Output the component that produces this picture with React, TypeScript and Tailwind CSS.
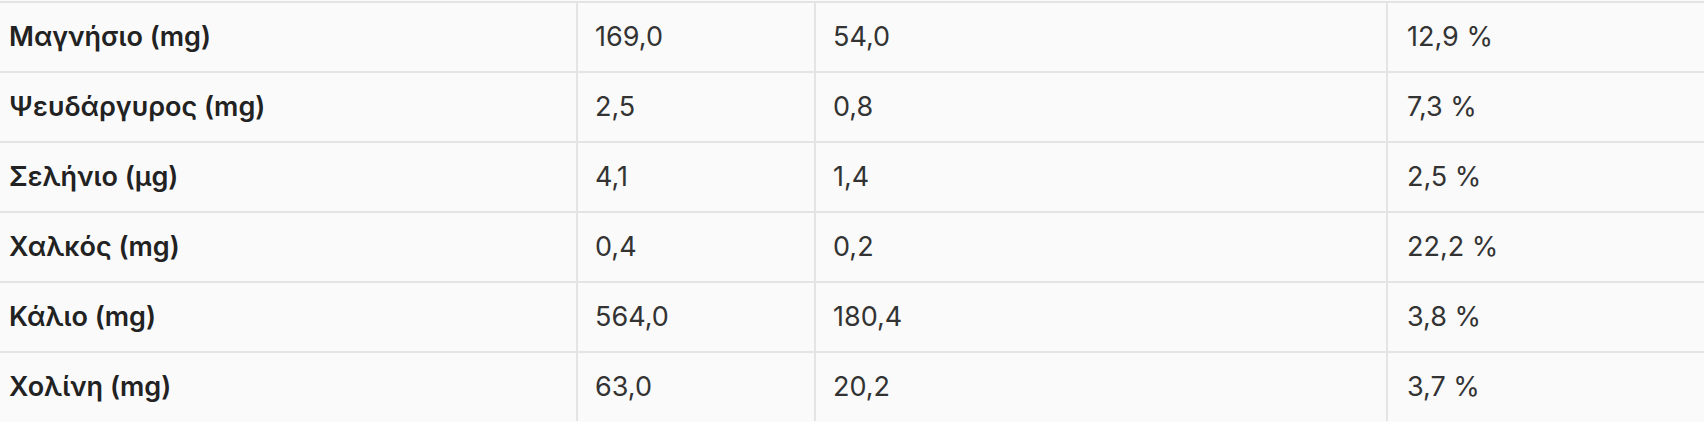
import React from 'react';

const rows = [
  { name: 'Μαγνήσιο (mg)', a: '169,0', b: '54,0', c: '12,9 %' },
  { name: 'Ψευδάργυρος (mg)', a: '2,5', b: '0,8', c: '7,3 %' },
  { name: 'Σελήνιο (μg)', a: '4,1', b: '1,4', c: '2,5 %' },
  { name: 'Χαλκός (mg)', a: '0,4', b: '0,2', c: '22,2 %' },
  { name: 'Κάλιο (mg)', a: '564,0', b: '180,4', c: '3,8 %' },
  { name: 'Χολίνη (mg)', a: '63,0', b: '20,2', c: '3,7 %' },
];

const App = () => {
  return (
    <div className="w-[1704px] h-[422px] overflow-hidden bg-[#fafafa] pt-px font-['Inter',sans-serif] text-[27px]">
      {rows.map((r) => (
        <div
          key={r.name}
          className="grid grid-cols-[576px_238px_572px_1fr] h-[70px] border-t-2 border-[#e4e4e4]"
        >
          <div className="flex items-center pl-[9px] font-semibold text-[#222]">{r.name}</div>
          <div className="flex items-center pl-[17px] border-l-2 border-[#e4e4e4] text-[#333]">{r.a}</div>
          <div className="flex items-center pl-[17px] border-l-2 border-[#e4e4e4] text-[#333]">{r.b}</div>
          <div className="flex items-center pl-[19px] border-l-2 border-[#e4e4e4] text-[#333]">{r.c}</div>
        </div>
      ))}
    </div>
  );
};

export default App;
